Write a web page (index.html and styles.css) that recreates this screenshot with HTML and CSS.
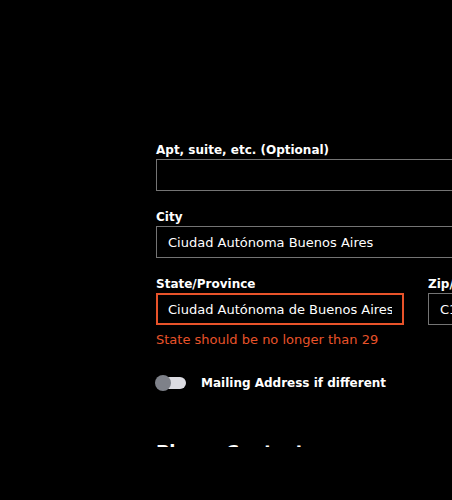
FILE: index.html
```html
<!DOCTYPE html>
<html lang="en">
<head>
    <meta charset="UTF-8">
    <meta name="viewport" content="width=device-width, initial-scale=1.0">
    <title>Shipping Address</title>
    <link rel="stylesheet" href="styles.css">
</head>
<body>
    <div class="container">
        <form class="address-form">
            <div class="form-group">
                <label>Apt, suite, etc. (Optional)</label>
                <input type="text" class="field wide">
            </div>
            <div class="form-group">
                <label>City</label>
                <input type="text" class="field wide" value="Ciudad Autónoma Buenos Aires">
            </div>
            <div class="form-row">
                <div class="form-group">
                    <label>State/Province</label>
                    <input type="text" class="field error" value="Ciudad Autónoma de Buenos Aires">
                    <p class="error-text">State should be no longer than 29</p>
                </div>
                <div class="form-group">
                    <label>Zip/Postal Code</label>
                    <input type="text" class="field" value="C1043">
                </div>
            </div>

            <div class="toggle-row">
                <span class="toggle"><span class="knob"></span></span>
                <span class="toggle-label">Mailing Address if different</span>
            </div>

            <h2 class="section-title">Phone Contact</h2>
        </form>
    </div>
    <div class="footer-mask"></div>
</body>
</html>
```

FILE: styles.css
```css
body {
    background-color: #000;
    color: #fff;
    font-family: "DejaVu Sans", sans-serif;
    margin: 0;
    padding: 0;
    overflow: hidden;
    height: 500px;
}

.container {
    padding: 139px 0 0 156px;
    width: 600px;
}

.form-group {
    margin-bottom: 15px;
}

label {
    display: block;
    font-size: 12px;
    font-weight: bold;
    line-height: 18px;
    padding-top: 2px;
}

.field {
    box-sizing: border-box;
    display: block;
    width: 248px;
    height: 32px;
    padding: 0 11px;
    background-color: #000;
    color: #fff;
    border: 1px solid #747474;
    border-radius: 0;
    font-family: "DejaVu Sans", sans-serif;
    font-size: 13px;
    outline: none;
}

.field.wide {
    width: 520px;
}

.field.error {
    border: 2px solid #e8532a;
    padding: 0 10px;
}

.form-row {
    display: flex;
    gap: 24px;
}

.error-text {
    color: #e8532a;
    font-size: 13px;
    margin: 7px 0 0 0;
}

.toggle-row {
    display: flex;
    align-items: center;
    gap: 15px;
    margin-top: 14px;
}

.toggle {
    position: relative;
    width: 30px;
    height: 12px;
    border-radius: 6px;
    background-color: #dcdce2;
}

.toggle .knob {
    position: absolute;
    left: -1px;
    top: -2px;
    width: 16px;
    height: 16px;
    border-radius: 50%;
    background-color: #7e8189;
}

.toggle-label {
    font-size: 12px;
    font-weight: bold;
}

.section-title {
    font-size: 18px;
    font-weight: bold;
    line-height: 26px;
    margin: 49px 0 0 0;
}

/* black bar that covers the page bottom */
.footer-mask {
    position: fixed;
    left: 0;
    right: 0;
    bottom: 0;
    height: 53px;
    background-color: #000;
}
```
